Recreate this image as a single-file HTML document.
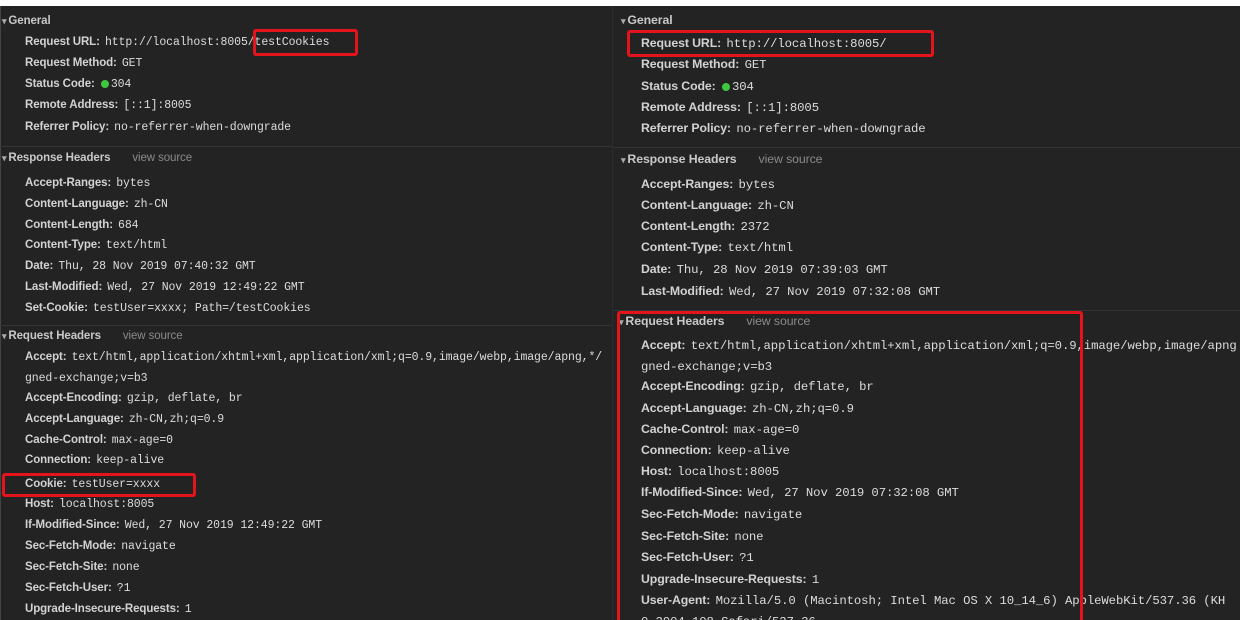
<!DOCTYPE html>
<html><head><meta charset="utf-8"><style>
html,body{margin:0;padding:0;overflow:hidden}
body{width:1240px;height:620px;position:relative;overflow:hidden;background:#232323;font-family:"Liberation Sans",sans-serif;}
.l{position:absolute;height:20px;line-height:20px;font-size:11.5px;color:#d2d2d2;white-space:nowrap;font-weight:bold;letter-spacing:-0.1px}
.l code{font-family:"Liberation Mono",monospace;font-weight:normal;font-size:11.5px;letter-spacing:-0.1px;color:#dcdcdc;margin-left:2px}
.r .l,.r .l code{font-size:12.3px}
.h{color:#c8c8c8}
.h:before{content:"\25BE";font-size:9px;margin-right:2px;color:#aaa}
.vs{font-weight:normal;color:#8a8a8a;margin-left:22px}
.sep{position:absolute;height:1px;background:#343434}
.box{position:absolute;border:3px solid #e3141c;border-radius:3px;box-sizing:border-box}
.dot{display:inline-block;width:8px;height:8px;border-radius:50%;background:#3fc83f;margin:0 0 0 3px;vertical-align:-1px}
</style></head><body>
<div style="position:absolute;left:0;top:0;width:1240px;height:6px;background:#fff"></div>
<div style="position:absolute;left:0;top:6px;width:1px;height:614px;background:#444"></div>
<div style="position:absolute;left:612px;top:6px;width:1px;height:614px;background:#2c2c2c"></div>
<div class="sep" style="left:0;top:146px;width:612px"></div>
<div class="sep" style="left:0;top:325px;width:612px"></div>
<div class="sep" style="left:613px;top:147px;width:627px"></div>
<div class="sep" style="left:613px;top:310px;width:627px"></div>

<!-- left -->
<div class="l h" style="left:2px;top:11px">General</div>
<div class="l" style="left:25px;top:32px">Request URL: <code>http://localhost:8005/testCookies</code></div>
<div class="l" style="left:25px;top:53px">Request Method: <code>GET</code></div>
<div class="l" style="left:25px;top:74px">Status Code: <span class="dot"></span><code>304</code></div>
<div class="l" style="left:25px;top:95px">Remote Address: <code>[::1]:8005</code></div>
<div class="l" style="left:25px;top:117px">Referrer Policy: <code>no-referrer-when-downgrade</code></div>
<div class="l h" style="left:2px;top:148px">Response Headers<span class="vs">view source</span></div>
<div class="l" style="left:25px;top:173px">Accept-Ranges: <code>bytes</code></div>
<div class="l" style="left:25px;top:194px">Content-Language: <code>zh-CN</code></div>
<div class="l" style="left:25px;top:215px">Content-Length: <code>684</code></div>
<div class="l" style="left:25px;top:235px">Content-Type: <code>text/html</code></div>
<div class="l" style="left:25px;top:256px">Date: <code>Thu, 28 Nov 2019 07:40:32 GMT</code></div>
<div class="l" style="left:25px;top:277px">Last-Modified: <code>Wed, 27 Nov 2019 12:49:22 GMT</code></div>
<div class="l" style="left:25px;top:298px">Set-Cookie: <code>testUser=xxxx; Path=/testCookies</code></div>
<div class="l h" style="left:2px;top:326px">Request Headers<span class="vs">view source</span></div>
<div class="l" style="left:25px;top:347px">Accept: <code>text/html,application/xhtml+xml,application/xml;q=0.9,image/webp,image/apng,*/</code></div>
<div class="l" style="left:25px;top:368px"><code style="margin:0">gned-exchange;v=b3</code></div>
<div class="l" style="left:25px;top:388px">Accept-Encoding: <code>gzip, deflate, br</code></div>
<div class="l" style="left:25px;top:409px">Accept-Language: <code>zh-CN,zh;q=0.9</code></div>
<div class="l" style="left:25px;top:430px">Cache-Control: <code>max-age=0</code></div>
<div class="l" style="left:25px;top:450px">Connection: <code>keep-alive</code></div>
<div class="l" style="left:25px;top:474px">Cookie: <code>testUser=xxxx</code></div>
<div class="l" style="left:25px;top:494px">Host: <code>localhost:8005</code></div>
<div class="l" style="left:25px;top:515px">If-Modified-Since: <code>Wed, 27 Nov 2019 12:49:22 GMT</code></div>
<div class="l" style="left:25px;top:536px">Sec-Fetch-Mode: <code>navigate</code></div>
<div class="l" style="left:25px;top:557px">Sec-Fetch-Site: <code>none</code></div>
<div class="l" style="left:25px;top:578px">Sec-Fetch-User: <code>?1</code></div>
<div class="l" style="left:25px;top:599px">Upgrade-Insecure-Requests: <code>1</code></div>

<!-- right -->
<div class="r">
<div class="l h" style="left:621px;top:10px">General</div>
<div class="l" style="left:641px;top:33px">Request URL: <code>http://localhost:8005/</code></div>
<div class="l" style="left:641px;top:54px">Request Method: <code>GET</code></div>
<div class="l" style="left:641px;top:76px">Status Code: <span class="dot"></span><code>304</code></div>
<div class="l" style="left:641px;top:97px">Remote Address: <code>[::1]:8005</code></div>
<div class="l" style="left:641px;top:118px">Referrer Policy: <code>no-referrer-when-downgrade</code></div>
<div class="l h" style="left:621px;top:149px">Response Headers<span class="vs">view source</span></div>
<div class="l" style="left:641px;top:174px">Accept-Ranges: <code>bytes</code></div>
<div class="l" style="left:641px;top:195px">Content-Language: <code>zh-CN</code></div>
<div class="l" style="left:641px;top:216px">Content-Length: <code>2372</code></div>
<div class="l" style="left:641px;top:237px">Content-Type: <code>text/html</code></div>
<div class="l" style="left:641px;top:259px">Date: <code>Thu, 28 Nov 2019 07:39:03 GMT</code></div>
<div class="l" style="left:641px;top:281px">Last-Modified: <code>Wed, 27 Nov 2019 07:32:08 GMT</code></div>
<div class="l h" style="left:619px;top:311px">Request Headers<span class="vs">view source</span></div>
<div class="l" style="left:641px;top:335px">Accept: <code>text/html,application/xhtml+xml,application/xml;q=0.9,image/webp,image/apng</code></div>
<div class="l" style="left:641px;top:356px"><code style="margin:0">gned-exchange;v=b3</code></div>
<div class="l" style="left:641px;top:376px">Accept-Encoding: <code>gzip, deflate, br</code></div>
<div class="l" style="left:641px;top:398px">Accept-Language: <code>zh-CN,zh;q=0.9</code></div>
<div class="l" style="left:641px;top:419px">Cache-Control: <code>max-age=0</code></div>
<div class="l" style="left:641px;top:440px">Connection: <code>keep-alive</code></div>
<div class="l" style="left:641px;top:461px">Host: <code>localhost:8005</code></div>
<div class="l" style="left:641px;top:482px">If-Modified-Since: <code>Wed, 27 Nov 2019 07:32:08 GMT</code></div>
<div class="l" style="left:641px;top:504px">Sec-Fetch-Mode: <code>navigate</code></div>
<div class="l" style="left:641px;top:526px">Sec-Fetch-Site: <code>none</code></div>
<div class="l" style="left:641px;top:547px">Sec-Fetch-User: <code>?1</code></div>
<div class="l" style="left:641px;top:569px">Upgrade-Insecure-Requests: <code>1</code></div>
<div class="l" style="left:641px;top:590px">User-Agent: <code>Mozilla/5.0 (Macintosh; Intel Mac OS X 10_14_6) AppleWebKit/537.36 (KH</code></div>
<div class="l" style="left:641px;top:611px"><code style="margin:0">0.3904.108 Safari/537.36</code></div>
</div>

<!-- red boxes -->
<div class="box" style="left:253px;top:29px;width:105px;height:27px"></div>
<div class="box" style="left:627px;top:30px;width:307px;height:27px"></div>
<div class="box" style="left:2px;top:473px;width:194px;height:24px"></div>
<div class="box" style="left:617px;top:311px;width:466px;height:312px"></div>
</body></html>
